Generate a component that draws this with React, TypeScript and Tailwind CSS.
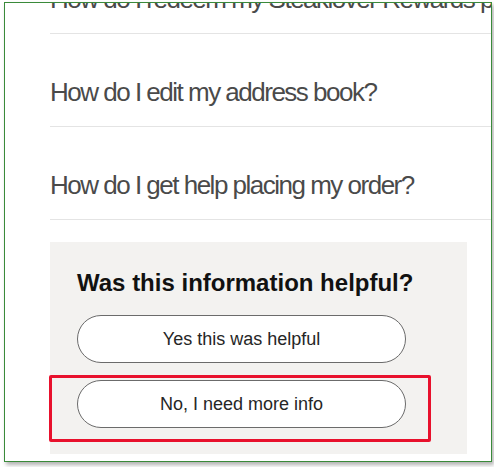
const questions = [
    "How do I redeem my Steaklover Rewards points?",
    "How do I edit my address book?",
    "How do I get help placing my order?",
];

const FaqRow = ({ text }: { text: string }) => (
    <div className="whitespace-nowrap border-b border-[#e4e4e4] pb-[18px] pt-[42px]">
        <span className="text-[26px] leading-[32px] tracking-[-1.5px] text-[#4a4a4a]">{text}</span>
    </div>
);

const HelpfulBox = () => (
    <div className="mt-[22px] w-[417px] bg-[#f3f2f0] px-[27px] pb-[26px] pt-[26px]">
        <h2 className="text-[24px] font-bold leading-[30px] text-[#111111]">
            Was this information helpful?
        </h2>
        <div className="mt-[17px] flex flex-col gap-[17px]">
            <button className="h-[48px] w-[329px] rounded-full border border-[#6b6b6b] bg-white text-[18px] text-[#262626]">
                Yes this was helpful
            </button>
            <div className="relative w-[329px]">
                <button className="h-[48px] w-[329px] rounded-full border border-[#6b6b6b] bg-white text-[18px] text-[#262626]">
                    No, I need more info
                </button>
                {/* annotation box */}
                <div className="pointer-events-none absolute -bottom-[14px] -left-[28px] -right-[25px] -top-[5px] rounded-[2px] border-[3px] border-[#e8112d]" />
            </div>
        </div>
    </div>
);

export default function App() {
    return (
        <div className="h-[467px] w-[494px] bg-white pl-[4px] pt-[2px] font-['Liberation_Sans',Arial,sans-serif]">
            <div className="h-[460px] w-[488px] overflow-hidden border border-[#3a8a3a] bg-white shadow-[2px_3px_4px_rgba(0,0,0,0.3)]">
                <div className="-mt-[62px] pl-[45px]">
                    {questions.map((q) => (
                        <FaqRow key={q} text={q} />
                    ))}
                    <HelpfulBox />
                </div>
            </div>
        </div>
    );
}
